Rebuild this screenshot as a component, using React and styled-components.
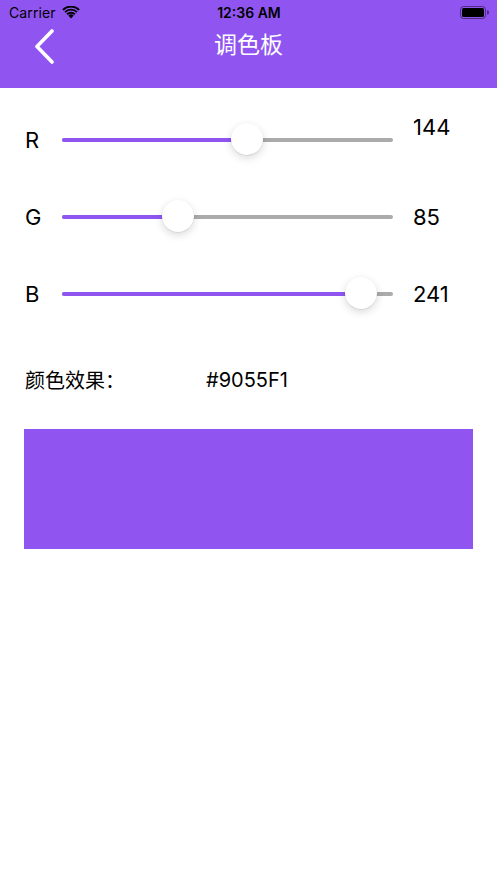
import styled, { createGlobalStyle } from 'styled-components'

const PURPLE = '#9055F1'

const GlobalStyle = createGlobalStyle`
  html, body {
    margin: 0;
    padding: 0;
    background: #fff;
  }
  body {
    font-family: Inter, "Noto Sans CJK SC", "Liberation Sans", sans-serif;
    color: #000;
  }
`

const Page = styled.div`
  width: 497px;
  min-height: 883px;
  background: #fff;
`

const Header = styled.header`
  background: ${PURPLE};
  height: 88px;
  display: flex;
  flex-direction: column;
`

const StatusBar = styled.div`
  height: 24px;
  display: grid;
  grid-template-columns: 1fr auto 1fr;
  align-items: center;
  padding: 0 8px 0 9px;
  font-size: 14px;
`

const StatusLeft = styled.div`
  display: flex;
  align-items: center;
  gap: 6px;
  letter-spacing: 0.1px;
`

const Clock = styled.div`
  font-weight: 600;
`

const StatusRight = styled.div`
  display: flex;
  justify-content: flex-end;
`

const NavBar = styled.div`
  flex: 1;
  display: grid;
  grid-template-columns: 80px 1fr 80px;
  align-items: start;
  padding-top: 5px;
`

const BackButton = styled.button`
  border: 0;
  background: none;
  padding: 0 0 0 34px;
  height: 36px;
  display: flex;
  align-items: center;
  cursor: pointer;
`

const Title = styled.h1`
  margin: -3px 0 0;
  text-align: center;
  color: #fff;
  font-family: "Noto Sans CJK SC", sans-serif;
  font-weight: 400;
  font-size: 23px;
  line-height: 34px;
`

const Content = styled.main`
  padding: 13px 24px 0 25px;
`

const SliderRow = styled.div`
  height: 77px;
  display: flex;
  align-items: center;
`

const ChannelLabel = styled.span`
  width: 37px;
  font-size: 22px;
`

const Track = styled.div`
  position: relative;
  flex: 1;
  height: 4px;
  border-radius: 2px;
  background: #ababab;
`

const Fill = styled.div`
  height: 100%;
  border-radius: 2px;
  background: ${PURPLE};
`

const Thumb = styled.div`
  position: absolute;
  top: 50%;
  width: 32px;
  height: 32px;
  margin-top: -17px;
  border-radius: 50%;
  background: #fff;
  box-shadow: 0 3px 8px rgba(0, 0, 0, 0.15), 0 0.5px 1px rgba(0, 0, 0, 0.12);
`

const Value = styled.span`
  width: 60px;
  margin-left: 20px;
  font-size: 22px;
  margin-bottom: ${p => (p.$raised ? '25px' : '0')};
`

const InfoRow = styled.div`
  display: flex;
  align-items: center;
  margin-top: 34px;
  font-size: 20px;
  line-height: 28px;
`

const InfoLabel = styled.span`
  width: 181px;
  font-family: "Noto Sans CJK SC", sans-serif;
`

const Swatch = styled.div`
  margin: 35px 0 0 -1px;
  height: 120px;
  background: ${p => p.$color};
`

function WifiIcon() {
  return (
    <svg width="18" height="13" viewBox="0 0 18 13">
      <path d="M9 12.6 L6.3 9.6 A3.9 3.9 0 0 1 11.7 9.6 Z" fill="#000" />
      <path d="M4.4 7.6 A6.6 6.6 0 0 1 13.6 7.6 L12.3 9 A4.7 4.7 0 0 0 5.7 9 Z" fill="#000" />
      <path d="M2.3 5.4 A9.6 9.6 0 0 1 15.7 5.4 L14.4 6.8 A7.6 7.6 0 0 0 3.6 6.8 Z" fill="#000" />
      <path d="M0.2 3.2 A12.6 12.6 0 0 1 17.8 3.2 L16.4 4.6 A10.6 10.6 0 0 0 1.6 4.6 Z" fill="#000" />
    </svg>
  )
}

function BatteryIcon() {
  return (
    <svg width="29" height="13" viewBox="0 0 29 13">
      <rect x="0.5" y="0.5" width="25" height="12" rx="3" fill="none" stroke="rgba(0,0,0,0.45)" />
      <rect x="2" y="2" width="22" height="9" rx="1.5" fill="#000" />
      <path d="M27 4.3 A2.2 2.2 0 0 1 27 8.7 Z" fill="rgba(0,0,0,0.45)" />
    </svg>
  )
}

function BackIcon() {
  return (
    <svg width="22" height="36" viewBox="0 0 22 36">
      <path d="M18 2 L3 17.5 L18 33" fill="none" stroke="#fff" strokeWidth="3.6" strokeLinecap="round" strokeLinejoin="round" />
    </svg>
  )
}

function Slider({ value, max = 255 }) {
  const frac = value / max
  return (
    <Track>
      <Fill style={{ width: `calc(16px + (100% - 32px) * ${frac})` }} />
      <Thumb style={{ left: `calc((100% - 32px) * ${frac})` }} />
    </Track>
  )
}

const channels = [
  { name: 'R', value: 144, raised: true },
  { name: 'G', value: 85 },
  { name: 'B', value: 241 },
]

const toHex = n => n.toString(16).toUpperCase().padStart(2, '0')

export default function App() {
  const hex = '#' + channels.map(c => toHex(c.value)).join('')
  return (
    <Page>
      <GlobalStyle />
      <Header>
        <StatusBar>
          <StatusLeft>
            Carrier
            <WifiIcon />
          </StatusLeft>
          <Clock>12:36 AM</Clock>
          <StatusRight>
            <BatteryIcon />
          </StatusRight>
        </StatusBar>
        <NavBar>
          <BackButton aria-label="back">
            <BackIcon />
          </BackButton>
          <Title>调色板</Title>
          <div />
        </NavBar>
      </Header>
      <Content>
        {channels.map(c => (
          <SliderRow key={c.name}>
            <ChannelLabel>{c.name}</ChannelLabel>
            <Slider value={c.value} />
            <Value $raised={c.raised}>{c.value}</Value>
          </SliderRow>
        ))}
        <InfoRow>
          <InfoLabel>颜色效果：</InfoLabel>
          <span>{hex}</span>
        </InfoRow>
        <Swatch $color={hex} />
      </Content>
    </Page>
  )
}
